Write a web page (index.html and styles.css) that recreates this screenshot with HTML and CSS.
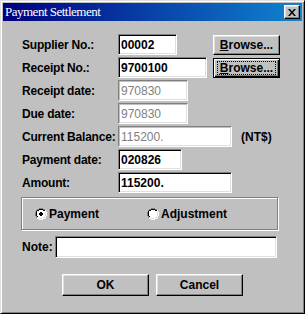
FILE: index.html
```html
<!DOCTYPE html>
<html lang="en">
<head>
  <meta charset="UTF-8">
  <title>Payment Settlement</title>
  <link rel="stylesheet" href="styles.css">
</head>
<body>
  <div class="window">
    <div class="titlebar">
      <span class="title">Payment Settlement</span>
      <button class="close-btn" type="button">
        <svg width="8" height="7" viewBox="0 0 8 7">
          <path d="M0 0h2l2 2.5L6 0h2L5 3.5 8 7H6L4 4.5 2 7H0l3-3.5z" fill="#000"/>
        </svg>
      </button>
    </div>

    <form class="form">
      <div class="row">
        <label class="label">Supplier No.:</label>
        <input class="field w-supplier" value="00002">
        <button class="btn browse browse-1" type="button"><u>B</u>rowse...</button>
      </div>
      <div class="row">
        <label class="label">Receipt No.:</label>
        <input class="field w-receipt" value="9700100">
        <button class="btn browse browse-2 is-default" type="button"><span class="focus-ring"><u>B</u>rowse...</span></button>
      </div>
      <div class="row">
        <label class="label">Receipt date:</label>
        <input class="field w-date" value="970830" disabled>
      </div>
      <div class="row">
        <label class="label">Due date:</label>
        <input class="field w-date" value="970830" disabled>
      </div>
      <div class="row">
        <label class="label">Current Balance:</label>
        <input class="field w-amount" value="115200." disabled>
        <span class="unit">(NT$)</span>
      </div>
      <div class="row">
        <label class="label">Payment date:</label>
        <input class="field w-paydate" value="020826">
      </div>
      <div class="row">
        <label class="label">Amount:</label>
        <input class="field w-amount" value="115200.">
      </div>

      <div class="group">
        <label class="option option-first">
          <svg class="radio" width="12" height="12" viewBox="0 0 12 12">
            <path d="M4 0h4v1h2v1h1v2h1v4h-1v2h-1v1H8v1H4v-1H2v-1H1V8H0V4h1V2h1V1h2z" fill="#fff"/>
            <path d="M4 0h4v1H4zM2 1h2v1H2zM8 1h2v1H8zM1 2h1v2H1zM0 4h1v4H0zM1 8h1v2H1z" fill="#808080"/>
            <path d="M4 1h4v1H4zM2 2h2v1H2zM8 2h2v1H8zM2 3h-1v1h1zM1 4h1v4H1zM2 8h1v1H2z" fill="#000"/>
            <path d="M10 8h1v2h-1zM11 4h1v4h-1zM8 10h2v1H8zM4 11h4v1H4zM2 10h2v1H2z" fill="#fff"/>
            <path d="M10 4h1v4h-1zM9 8h1v2H9zM8 9h1v1H8zM4 10h4v1H4zM2 9h2v1H2z" fill="#dfdfdf"/>
            <path d="M5 4h2v1h1v2H7v1H5V7H4V5h1z" fill="#000"/>
          </svg>
          <span>Payment</span>
        </label>
        <label class="option">
          <svg class="radio" width="12" height="12" viewBox="0 0 12 12">
            <path d="M4 0h4v1h2v1h1v2h1v4h-1v2h-1v1H8v1H4v-1H2v-1H1V8H0V4h1V2h1V1h2z" fill="#fff"/>
            <path d="M4 0h4v1H4zM2 1h2v1H2zM8 1h2v1H8zM1 2h1v2H1zM0 4h1v4H0zM1 8h1v2H1z" fill="#808080"/>
            <path d="M4 1h4v1H4zM2 2h2v1H2zM8 2h2v1H8zM2 3h-1v1h1zM1 4h1v4H1zM2 8h1v1H2z" fill="#000"/>
            <path d="M10 8h1v2h-1zM11 4h1v4h-1zM8 10h2v1H8zM4 11h4v1H4zM2 10h2v1H2z" fill="#fff"/>
            <path d="M10 4h1v4h-1zM9 8h1v2H9zM8 9h1v1H8zM4 10h4v1H4zM2 9h2v1H2z" fill="#dfdfdf"/>
          </svg>
          <span>Adjustment</span>
        </label>
      </div>

      <div class="note-row">
        <label class="note-label">Note:</label>
        <input class="field w-note" value="">
      </div>

      <div class="actions">
        <button class="btn action" type="button">OK</button>
        <button class="btn action" type="button">Cancel</button>
      </div>
    </form>
  </div>
</body>
</html>
```

FILE: styles.css
```css
body {
  margin: 0;
  background: #c0c0c0;
  font-family: "Liberation Sans", Arial, sans-serif;
}

.window {
  width: 305px;
  height: 314px;
  box-sizing: border-box;
  background: #c0c0c0;
  border: 1px solid;
  border-color: #dfdfdf #000 #000 #dfdfdf;
  box-shadow: inset 1px 1px #fff, inset -1px -1px #808080;
  padding: 2px;
}

.titlebar {
  height: 18px;
  display: flex;
  align-items: center;
  justify-content: space-between;
  padding: 0 2px 0 2px;
  background: linear-gradient(90deg, #000080, #1084d0);
}

.title {
  color: #fff;
  font-family: "Liberation Serif", "Times New Roman", serif;
  font-size: 13px;
  letter-spacing: -0.5px;
}

.close-btn {
  width: 16px;
  height: 14px;
  padding: 0;
  display: flex;
  align-items: center;
  justify-content: center;
  background: #c0c0c0;
  border: 1px solid;
  border-color: #fff #000 #000 #fff;
  box-shadow: inset -1px -1px #808080, inset 1px 1px #dfdfdf;
}

.form {
  margin: 0;
  padding: 13px 0 0 19px;
}

.row {
  display: flex;
  align-items: center;
  height: 21px;
  margin-bottom: 2px;
}

.label {
  width: 96px;
  flex-shrink: 0;
  white-space: nowrap;
  font-size: 12px;
  font-weight: bold;
  letter-spacing: -0.2px;
  color: #000;
}

.field {
  height: 21px;
  box-sizing: border-box;
  flex-shrink: 0;
  margin: 0;
  padding: 0 2px;
  border: 1px solid;
  border-color: #808080 #fff #fff #808080;
  box-shadow: inset 1px 1px #000, inset -1px -1px #dfdfdf;
  background: #fff;
  color: #000;
  font-family: "Liberation Sans", Arial, sans-serif;
  font-size: 12px;
  font-weight: bold;
  outline: none;
}

.field:disabled {
  color: #808080;
  background: #fff;
  font-weight: normal;
  box-shadow: inset 1px 1px #c0c0c0, inset -1px -1px #dfdfdf;
}

.w-supplier { width: 59px; }
.w-receipt { width: 89px; }
.w-date { width: 70px; }
.w-paydate { width: 64px; }
.w-amount { width: 114px; }
.w-note { width: 222px; height: 22px; }

.unit {
  margin-left: 9px;
  font-size: 12px;
  font-weight: bold;
}

.btn {
  padding: 0;
  background: #c0c0c0;
  border: 1px solid;
  border-color: #fff #000 #000 #fff;
  box-shadow: inset -1px -1px #808080, inset 1px 1px #dfdfdf;
  color: #000;
  font-family: "Liberation Sans", Arial, sans-serif;
  font-size: 12px;
  font-weight: bold;
}

.browse {
  width: 67px;
  height: 20px;
  flex-shrink: 0;
}

.browse-1 { margin-left: 36px; }
.browse-2 { margin-left: 6px; }

.btn.is-default {
  border-color: #000;
  box-shadow: inset 1px 1px #fff, inset -1px -1px #000, inset -2px -2px #808080;
  display: flex;
  align-items: center;
  justify-content: center;
}

.focus-ring {
  display: block;
  width: 57px;
  height: 12px;
  line-height: 12px;
  border: 1px dotted #000;
}

.group {
  width: 257px;
  height: 33px;
  box-sizing: border-box;
  margin: 4px 0 0 -1px;
  padding-left: 13px;
  display: flex;
  align-items: center;
  border: 1px solid #808080;
  box-shadow: inset 1px 1px #fff, 1px 1px #fff;
}

.option {
  display: flex;
  align-items: center;
  gap: 2px;
  font-size: 12px;
  font-weight: bold;
}

.option-first {
  width: 112px;
}

.radio {
  display: block;
}

.note-row {
  display: flex;
  align-items: center;
  margin-top: 6px;
}

.note-label {
  width: 33px;
  font-size: 12px;
  font-weight: bold;
}

.actions {
  display: flex;
  justify-content: center;
  gap: 7px;
  margin: 16px 0 0 -19px;
}

.action {
  width: 87px;
  height: 22px;
}
```
